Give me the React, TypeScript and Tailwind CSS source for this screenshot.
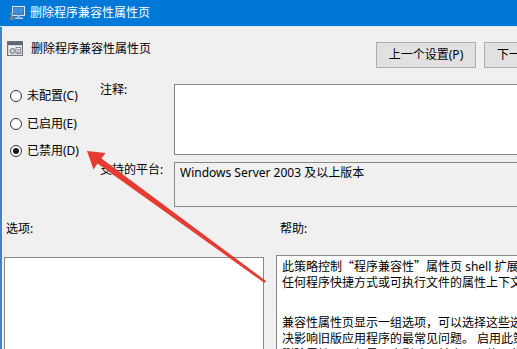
import React from "react";

function TitleIcon() {
  return (
    <svg width="16" height="16" viewBox="0 0 16 16">
      <rect x="3.5" y="1.5" width="12" height="9" fill="#2a6db8" stroke="#dfe6ee" />
      <rect x="4.5" y="2.5" width="10" height="7" fill="#3f8fd8" />
      <rect x="8" y="10.5" width="3" height="2" fill="#9aa4ae" />
      <rect x="6" y="12.5" width="8" height="1.5" fill="#c8ced4" />
      <circle cx="3" cy="9" r="1.6" fill="#9a9a9a" />
      <rect x="1" y="11" width="4" height="4" rx="1" fill="#7d7d7d" />
    </svg>
  );
}

function PageIcon() {
  return (
    <svg width="16" height="17" viewBox="0 0 16 17">
      <rect x="0.5" y="1.5" width="15" height="14" fill="#cfd2d6" stroke="#6f747a" />
      <rect x="1" y="2" width="14" height="3" fill="#5b6878" />
      <rect x="2" y="6" width="12" height="8.5" fill="#f4f4f4" />
      <circle cx="5.5" cy="11" r="2.6" fill="#b9c0c7" stroke="#5f666d" strokeWidth="0.8" />
      <circle cx="5.5" cy="11" r="0.8" fill="#f4f4f4" />
      <rect x="9" y="7.5" width="4.5" height="6" fill="#ffffff" stroke="#6f747a" strokeWidth="0.8" />
      <rect x="10" y="9" width="2.5" height="0.8" fill="#6f747a" />
      <rect x="10" y="10.6" width="2.5" height="0.8" fill="#6f747a" />
      <rect x="10" y="12.2" width="2.5" height="0.8" fill="#6f747a" />
    </svg>
  );
}

function Radio({ checked, label }: { checked?: boolean; label: string }) {
  return (
    <div className="flex h-[12px] items-center gap-[5px]">
      <div className="flex h-[12px] w-[12px] items-center justify-center rounded-full border border-[#333333] bg-white">
        {checked ? <div className="h-[6px] w-[6px] rounded-full bg-[#1a1a1a]" /> : null}
      </div>
      <span className="whitespace-nowrap">{label}</span>
    </div>
  );
}

export default function App() {
  return (
    <div className="relative h-[349px] w-[517px] overflow-hidden bg-[#f0f0f0] font-['Noto_Sans','Noto_Sans_CJK_SC',sans-serif] text-[12px] leading-[16px] text-black">
      <div className="flex h-[26px] items-center gap-[5px] bg-[#0078d7] pl-[9px] text-white">
        <TitleIcon />
        <span className="whitespace-nowrap">删除程序兼容性属性页</span>
      </div>
      <div className="h-[1px] bg-[#d6e8f8]" />
      <div className="flex flex-col border-l-2 border-[#3a86cc]">
        {/* header row */}
        <div className="flex h-[41px] items-start pt-[13px]">
          <div className="flex w-[374px] shrink-0 items-center gap-[8px] pl-[5px]">
            <PageIcon />
            <span className="whitespace-nowrap">删除程序兼容性属性页</span>
          </div>
          <button className="mt-[2px] flex h-[26px] w-[100px] shrink-0 items-center justify-center border border-[#adadad] bg-[#e1e1e1] text-[12px]">
            上一个设置(P)
          </button>
          <button className="ml-[8px] mt-[2px] flex h-[26px] w-[100px] shrink-0 items-center justify-start border border-[#adadad] bg-[#e1e1e1] pl-[12px] text-[12px]">
            下一个设置(N)
          </button>
        </div>

        {/* main row */}
        <div className="mt-[16px] flex">
          <div className="flex w-[98px] shrink-0 flex-col gap-[15.5px] pl-[8px] pt-[6px]">
            <Radio label="未配置(C)" />
            <Radio label="已启用(E)" />
            <Radio checked label="已禁用(D)" />
          </div>
          <div className="grid shrink-0 grid-cols-[74px_360px] grid-rows-[71px_45px] gap-y-[7px]">
            <div className="mt-[-2px] whitespace-nowrap">注释:</div>
            <div className="border border-[#878787] bg-white" />
            <div className="whitespace-nowrap">支持的平台:</div>
            <div className="whitespace-nowrap border border-[#878787] bg-[#f0f0f0] pl-[5px] pt-[2px]">
              Windows Server 2003 及以上版本
            </div>
          </div>
        </div>

        {/* labels row */}
        <div className="mt-[14px] flex h-[16px]">
          <div className="w-[274px] shrink-0 pl-[4px]">选项:</div>
          <div className="pl-[4px]">帮助:</div>
        </div>

        {/* bottom row */}
        <div className="mt-[18px] flex items-start">
          <div className="ml-[2px] mt-[2px] h-[120px] w-[260px] shrink-0 border border-[#878787] bg-white" />
          <div className="ml-[12px] h-[120px] w-[320px] shrink-0 border border-[#878787] bg-white px-[5px] pt-[2px]">
            <div className="whitespace-nowrap">
              此策略控制<span className="font-['Noto_Sans_CJK_SC']">“</span>程序兼容性<span className="font-['Noto_Sans_CJK_SC']">”</span>属性页 shell 扩展的可见性。此 shell 扩展在
            </div>
            <div className="whitespace-nowrap">任何程序快捷方式或可执行文件的属性上下文菜单上可见。</div>
            <div className="mt-[24px] whitespace-nowrap">兼容性属性页显示一组选项，可以选择这些选项并将其应用到应用程序，以解</div>
            <div className="whitespace-nowrap">决影响旧版应用程序的最常见问题。 启用此策略设置将从上下文菜单中</div>
            <div className="whitespace-nowrap">删除属性页，但是不会影响以前应用于使用此界面的应用程序的兼容性设置。</div>
          </div>
        </div>
      </div>

      {/* red arrow annotation */}
      <svg className="pointer-events-none absolute left-0 top-0" width="517" height="349" viewBox="0 0 517 349">
        <polygon
          points="87,151 105.5,153 101.5,158.5 266,281 264.5,283 97.5,163.5 93.5,169.5"
          fill="#e43c33"
        />
      </svg>
    </div>
  );
}
